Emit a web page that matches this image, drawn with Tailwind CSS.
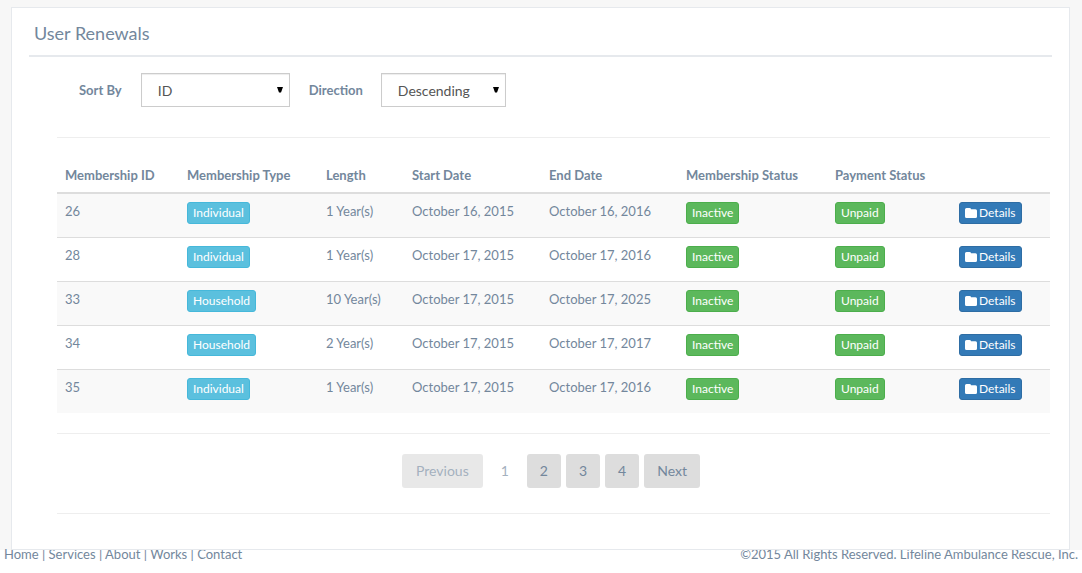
<!DOCTYPE html>
<html lang="en">
<head>
<meta charset="utf-8">
<meta name="viewport" content="width=device-width, initial-scale=1">
<title>User Renewals</title>
<script src="https://cdn.jsdelivr.net/npm/@tailwindcss/browser@4"></script>
</head>
<body class="bg-white font-['Lato',sans-serif] text-[13px] leading-[19px] text-[#73879c]">
<svg class="hidden" aria-hidden="true">
  <symbol id="folder" viewBox="0 0 12 12"><path d="M0 2.500Q0 1 1.500 1H4.500Q6 1 6 2.200H10.500Q12 2.200 12 3.700V9.500Q12 11 10.500 11H1.500Q0 11 0 9.500Z"/></symbol>
</svg>
<main class="bg-[#f7f7f7] px-3 pt-[7px] pl-[11px]">
  <section class="relative -mb-[10px] border border-[#e6e9ed] bg-white px-[17px] pt-[10px] pb-[35px]">
    <h1 class="border-b-2 border-[#e6e9ed] px-[5px] pt-[5px] pb-3 text-lg leading-5">User Renewals</h1>
    <div class="pr-[2px] pl-7">
      <form class="flex items-center pt-4 pb-[30px] pl-[22px]">
        <label for="sort" class="mr-[19px] font-bold">Sort By</label>
        <div class="relative mr-[19px] h-[34px] w-[149px]">
          <select id="sort" class="h-full w-full appearance-none border border-[#cccccc] bg-white pt-px pl-4 text-sm text-[#555555] shadow-[inset_0_1px_1px_rgba(0,0,0,0.075)]"><option>ID</option></select>
          <svg class="pointer-events-none absolute top-[14px] right-[7px] h-[6px] w-[6px]" viewBox="0 0 6 6"><path d="M0 0H6L4 5.500H2Z"/></svg>
        </div>
        <label for="direction" class="mr-[18px] font-bold">Direction</label>
        <div class="relative h-[34px] w-[125px]">
          <select id="direction" class="h-full w-full appearance-none border border-[#cccccc] bg-white pt-px pl-4 text-sm text-[#555555] shadow-[inset_0_1px_1px_rgba(0,0,0,0.075)]"><option>Descending</option><option>Ascending</option></select>
          <svg class="pointer-events-none absolute top-[14px] right-[7px] h-[6px] w-[6px]" viewBox="0 0 6 6"><path d="M0 0H6L4 5.500H2Z"/></svg>
        </div>
      </form>
      <hr class="mb-5 border-[#eeeeee]">
      <table class="w-full table-fixed border-collapse text-left">
        <colgroup><col class="w-[122px]"><col class="w-[139px]"><col class="w-[86px]"><col class="w-[137px]"><col class="w-[137px]"><col class="w-[149px]"><col class="w-[124px]"><col class="w-[99px]"></colgroup>
        <thead>
          <tr class="h-[35px] border-b-2 border-[#dddddd] whitespace-nowrap"><th class="px-2">Membership ID</th><th class="px-2">Membership Type</th><th class="px-2">Length</th><th class="px-2">Start Date</th><th class="px-2">End Date</th><th class="px-2">Membership Status</th><th class="px-2">Payment Status</th><td></td></tr>
        </thead>
        <tbody id="rows"></tbody>
      </table>
      <hr class="my-5 border-[#eeeeee]">
      <nav aria-label="Pages" class="flex justify-center gap-[5px] pr-[5px] text-sm leading-5">
        <button disabled class="h-[34px] rounded-[3px] bg-[#dddddd] px-[14px] opacity-65">Previous</button>
        <button disabled class="h-[34px] px-[13px] opacity-65">1</button>
        <button class="h-[34px] rounded-[3px] bg-[#dddddd] px-[13px]">2</button>
        <button class="h-[34px] rounded-[3px] bg-[#dddddd] px-[13px]">3</button>
        <button class="h-[34px] rounded-[3px] bg-[#dddddd] px-[13px]">4</button>
        <button class="h-[34px] rounded-[3px] bg-[#dddddd] px-[13px]">Next</button>
      </nav>
      <hr class="mt-[25px] border-[#eeeeee]">
    </div>
  </section>
</main>
<footer class="flex justify-between px-1 pt-[5px]">
  <nav aria-label="Footer"><a href="#">Home</a> | <a href="#">Services</a> | <a href="#">About</a> | <a href="#">Works</a> | <a href="#">Contact</a></nav>
  <p>©2015 All Rights Reserved. Lifeline Ambulance Rescue, Inc.</p>
</footer>
<script>
const btn = 'flex h-[22px] w-fit items-center rounded-[3px] border px-[5px] text-xs text-white';
const rows = [
  ['26', 'Individual', '1 Year(s)', 'October 16, 2015', 'October 16, 2016'],
  ['28', 'Individual', '1 Year(s)', 'October 17, 2015', 'October 17, 2016'],
  ['33', 'Household', '10 Year(s)', 'October 17, 2015', 'October 17, 2025'],
  ['34', 'Household', '2 Year(s)', 'October 17, 2015', 'October 17, 2017'],
  ['35', 'Individual', '1 Year(s)', 'October 17, 2015', 'October 17, 2016']
];
document.getElementById('rows').innerHTML = rows.map(([id, type, len, start, end]) => `
  <tr class="h-11 border-t border-[#dddddd] align-top whitespace-nowrap first:border-t-0 odd:bg-[#f9f9f9]">
    <td class="px-2 pt-2">${id}</td>
    <td class="px-2 pt-2"><button class="${btn} border-[#46b8da] bg-[#5bc0de]">${type}</button></td>
    <td class="px-2 pt-2">${len}</td>
    <td class="px-2 pt-2">${start}</td>
    <td class="px-2 pt-2">${end}</td>
    <td class="px-2 pt-2"><button class="${btn} border-[#4cae4c] bg-[#5cb85c]">Inactive</button></td>
    <td class="px-2 pt-2"><button class="${btn} border-[#4cae4c] bg-[#5cb85c]">Unpaid</button></td>
    <td class="px-2 pt-2"><button class="${btn} gap-[2px] border-[#2e6da4] bg-[#337ab7]"><svg class="h-3 w-3 fill-white"><use href="#folder"/></svg>Details</button></td>
  </tr>`).join('');
</script>
</body>
</html>
